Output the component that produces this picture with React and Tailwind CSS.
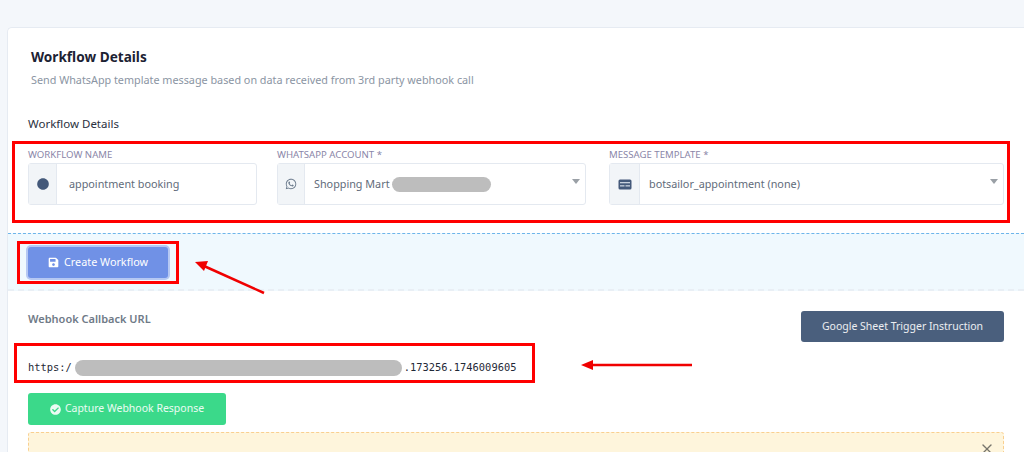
import React from "react";
import { FaWhatsapp, FaSave, FaCheckCircle, FaCircle } from "react-icons/fa";
import { X } from "lucide-react";

const font = "font-['Noto_Sans','Open_Sans',sans-serif]";

function Field({ label, width, icon, addonW, children, caret }) {
  return (
    <div className={width}>
      <div className="text-[9.6px] leading-[14px] text-[#8a86a8] uppercase mb-[1px]">{label}</div>
      <div className="flex h-[42px] bg-white border border-[#e4e9f0] rounded-[3px]">
        <div className={`${addonW} shrink-0 flex items-center justify-center bg-[#f2f5f8] border-r border-[#e4e9f0]`}>{icon}</div>
        <div className="flex-1 flex items-center text-[10.8px] text-[#5f6b7a] relative">
          {children}
          {caret && <span className="absolute right-[5px] top-[15px] w-0 h-0 border-l-[4px] border-r-[4px] border-t-[5px] border-l-transparent border-r-transparent border-t-[#9aa0a6]" />}
        </div>
      </div>
    </div>
  );
}

function TemplateIcon() {
  return (
    <svg width="14" height="11" viewBox="0 0 14 11">
      <rect x="0.5" y="0.5" width="13" height="10" rx="1.5" fill="#44597a" />
      <rect x="2" y="3" width="10" height="1.3" fill="#c8d1dd" />
      <rect x="2" y="6.2" width="4.5" height="1.3" fill="#c8d1dd" />
      <rect x="7.5" y="6.2" width="4.5" height="1.3" fill="#c8d1dd" />
    </svg>
  );
}

export default function App() {
  return (
    <div className={`${font} relative h-[452px] w-[1024px] overflow-hidden bg-[#f4f7fb] pt-[27px] pl-[7px]`}>
      <div className="bg-white rounded-tl-[5px] border-t border-l border-[#e6ebf2] h-[425px]">
        <div className="pl-[23px] pt-[19px]">
          <h1 className="text-[13.6px] leading-[20px] font-bold text-[#1c2233]">Workflow Details</h1>
          <p className="mt-[5px] text-[10.8px] leading-[16px] text-[#8b95a3]">Send WhatsApp template message based on data received from 3rd party webhook call</p>
        </div>
        <div className="pl-[20px] mt-[28px] text-[11.5px] leading-[16px] text-[#2a3040]">Workflow Details</div>
        <div className="flex pl-[20px] mt-[16px]">
          <Field label="Workflow Name" width="w-[229px] mr-[20px]" addonW="w-[28px]" icon={<FaCircle className="text-[#44597a] text-[12px]" />}>
            <span className="ml-[12px]">appointment booking</span>
          </Field>
          <Field label="WhatsApp Account *" width="w-[309px] mr-[23px]" addonW="w-[27px]" caret icon={<FaWhatsapp className="text-[#6b7a8c] text-[12px]" />}>
            <span className="ml-[9px]">Shopping Mart</span>
            <span className="ml-[2px] w-[99px] h-[15px] rounded-full bg-[#bdbdbd]" />
          </Field>
          <Field label="Message Template *" width="w-[395px]" addonW="w-[30px]" caret icon={<TemplateIcon />}>
            <span className="ml-[9px]">botsailor_appointment (none)</span>
          </Field>
        </div>

        <div className="mt-[28px] h-[58px] bg-[#f0f9fe] border-t border-dashed border-t-[#6db5ea] border-b-2 border-b-[#e9eff5] pl-[20px] pt-[13px]">
          <button className="flex items-center justify-center gap-[5px] w-[140px] h-[31px] rounded-[3px] bg-[#7091e6] ring-2 ring-[#b6c8f3] text-white text-[10.8px]">
            <FaSave className="text-[11px]" />
            Create Workflow
          </button>
        </div>

        <div className="relative pl-[20px]">
          <div className="flex justify-between items-start pr-[20px] pt-[20px]">
            <div className="text-[11px] leading-[16px] font-semibold text-[#6f7a87]">Webhook Callback URL</div>
            <button className="w-[203px] h-[31px] rounded-[3px] bg-[#4a5f7d] text-white/90 text-[10.5px]">Google Sheet Trigger Instruction</button>
          </div>
          <div className="flex items-center mt-[18px] h-[16px] font-['DejaVu_Sans_Mono',monospace] text-[10.4px] text-[#1f2937]">
            <span>https:/</span>
            <span className="ml-[3px] w-[327px] h-[16px] rounded-full bg-[#bdbdbd]" />
            <span className="ml-[2px]">.173256.1746009605</span>
          </div>
          <button className="mt-[17px] flex items-center justify-center gap-[4px] w-[198px] h-[32px] rounded-[3px] bg-[#3bd98a] text-white/90 text-[10.5px]">
            <FaCheckCircle className="text-[11px]" />
            Capture Webhook Response
          </button>
          <div className="relative mt-[7px] mr-[20px] h-[40px] bg-[#fef5dc] border border-dashed border-[#f9cf90] rounded-[3px]">
            <X className="absolute right-[8px] top-[8px] text-[#77756c]" size={16} strokeWidth={2} />
          </div>
        </div>
      </div>

      <div className="absolute left-[12px] top-[141px] w-[998px] h-[82px] border-[3px] border-[#ff0000]" />
      <div className="absolute left-[17px] top-[241px] w-[162px] h-[43px] border-[3px] border-[#ff0000]" />
      <div className="absolute left-[14px] top-[343px] w-[521px] h-[40px] border-[3px] border-[#ff0000]" />
      <svg className="absolute left-0 top-0" width="1024" height="452" viewBox="0 0 1024 452">
        <line x1="264" y1="293" x2="204" y2="266" stroke="#f00000" strokeWidth="2.5" />
        <polygon points="195,262 208,261 204,271" fill="#f00000" />
        <line x1="692" y1="365" x2="592" y2="365" stroke="#f00000" strokeWidth="2.5" />
        <polygon points="581,365 593,360 593,370" fill="#f00000" />
      </svg>
    </div>
  );
}
